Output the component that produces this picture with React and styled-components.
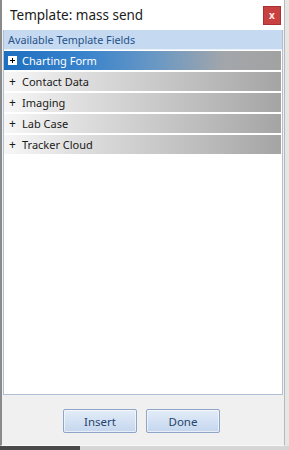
import React from "react";
import styled, { createGlobalStyle } from "styled-components";

const Global = createGlobalStyle`
  html, body { margin: 0; padding: 0; }
  body { font-family: "Noto Sans", "Open Sans", sans-serif; background: #e4e4e4; }
`;

const Screen = styled.div`
  width: 289px;
  height: 450px;
  display: flex;
  flex-direction: column;
  background: #e6e6e6;
  overflow: hidden;
`;

const Window = styled.div`
  width: 285px;
  height: 446px;
  box-sizing: border-box;
  display: flex;
  flex-direction: column;
  background: #f0f0f0;
  border-left: 2px solid #8a8a8a;
  border-right: 1px solid #b9b9b9;
  border-bottom: 1px solid #fafafa;
`;

const TitleBar = styled.div`
  height: 30px;
  flex: none;
  display: flex;
  align-items: center;
  justify-content: space-between;
  padding: 0 3px 0 8px;
  background: #ffffff;
`;

const Title = styled.div`
  font-size: 13.5px;
  color: #1a1a1a;
`;

const CloseBtn = styled.div`
  width: 16px;
  height: 17px;
  background: #c94040;
  border: 1px solid #a83232;
  color: #ffe8e8;
  font-size: 10px;
  font-weight: bold;
  display: flex;
  align-items: center;
  justify-content: center;
  line-height: 1;
`;

const Panel = styled.div`
  flex: 1;
  margin: 0 0 0 1px;
  width: 280px;
  box-sizing: border-box;
  background: #ffffff;
  border: 1px solid #aebfd6;
  border-top: none;
  display: flex;
  flex-direction: column;
`;

const Header = styled.div`
  height: 19px;
  background: #c5d9f1;
  color: #27528a;
  font-size: 10.8px;
  display: flex;
  align-items: center;
  padding-left: 4px;
  border-bottom: 1px solid #e8f0fa;
`;

const List = styled.div`
  display: flex;
  flex-direction: column;
  gap: 2px;
  padding-top: 1px;
  padding-right: 1px;
`;

const Row = styled.div`
  height: 19px;
  display: flex;
  align-items: center;
  gap: 5px;
  padding-left: 4px;
  font-size: 11px;
  color: ${(p) => (p.$active ? "#ffffff" : "#1a1a1a")};
  background: ${(p) =>
    p.$active
      ? "linear-gradient(90deg, #1e6fc0 0%, #3a84cc 30%, #6a98c4 55%, #a3a6aa 80%, #a2a2a2 100%)"
      : "linear-gradient(90deg, #f7f7f7 0%, #e0e0e0 25%, #c9c9c9 55%, #b5b5b5 80%, #a4a4a4 100%)"};
`;

const PlusBox = styled.span`
  width: 9px;
  height: 9px;
  box-sizing: border-box;
  background: #ffffff;
  border: 1px solid #ffffff;
  position: relative;
  flex: none;
  &::before, &::after {
    content: "";
    position: absolute;
    background: #000;
  }
  &::before { left: 1px; right: 1px; top: 3px; height: 1px; }
  &::after { top: 1px; bottom: 1px; left: 3px; width: 1px; }
`;

const Plus = styled.span`
  width: 9px;
  text-align: center;
  font-size: 12px;
  flex: none;
`;

const Footer = styled.div`
  height: 50px;
  flex: none;
  display: flex;
  justify-content: center;
  align-items: flex-start;
  gap: 9px;
  padding-top: 14px;
  box-sizing: border-box;
  padding-right: 3px;
`;

const Button = styled.div`
  width: 74px;
  height: 24px;
  box-sizing: border-box;
  border: 1px solid #8ea5c8;
  border-radius: 2px;
  background: linear-gradient(180deg, #e4edf8 0%, #d3e1f3 50%, #c5d7ee 100%);
  box-shadow: inset 0 0 0 1px rgba(255, 255, 255, 0.6);
  color: #27456e;
  font-size: 11.5px;
  display: flex;
  align-items: center;
  justify-content: center;
`;

const BottomStrip = styled.div`
  height: 4px;
  display: flex;
`;

const TaskPiece = styled.div`
  width: ${(p) => p.$w};
  background: ${(p) => p.$c};
  flex: ${(p) => (p.$grow ? 1 : "none")};
`;

const items = ["Charting Form", "Contact Data", "Imaging", "Lab Case", "Tracker Cloud"];

export default function App() {
  return (
    <Screen>
      <Global />
      <Window>
        <TitleBar>
          <Title>Template: mass send</Title>
          <CloseBtn>x</CloseBtn>
        </TitleBar>
        <Panel>
          <Header>Available Template Fields</Header>
          <List>
            {items.map((t, i) => (
              <Row key={t} $active={i === 0}>
                {i === 0 ? <PlusBox /> : <Plus>+</Plus>}
                {t}
              </Row>
            ))}
          </List>
        </Panel>
        <Footer>
          <Button>Insert</Button>
          <Button>Done</Button>
        </Footer>
      </Window>
      <BottomStrip>
        <TaskPiece $w="80px" $c="#4a4a4a" />
        <TaskPiece $grow $c="#d6d6d6" />
      </BottomStrip>
    </Screen>
  );
}
